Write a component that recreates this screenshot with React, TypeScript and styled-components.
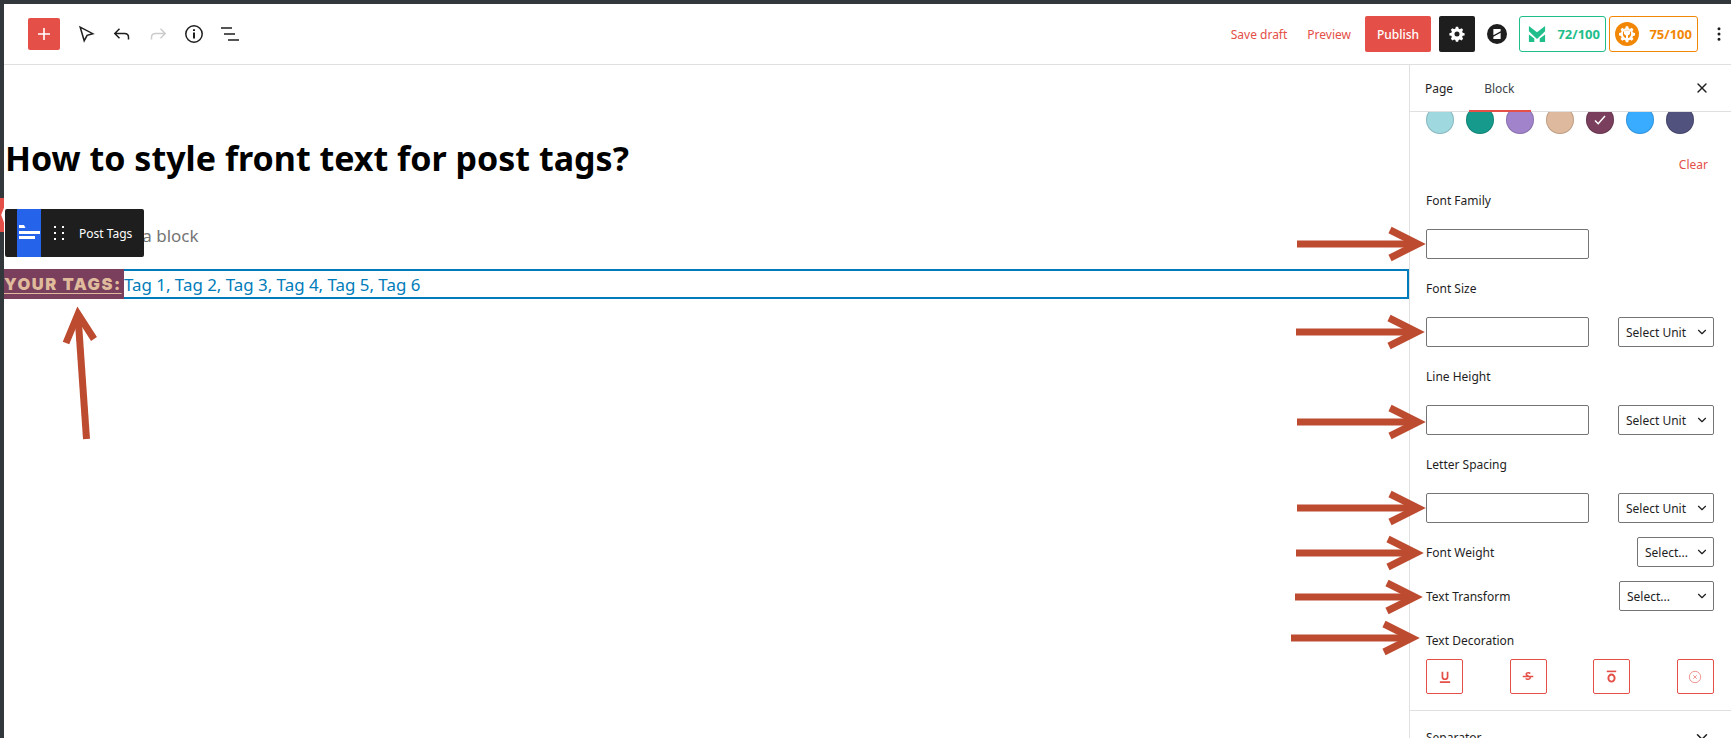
import React from 'react';
import styled, { createGlobalStyle } from 'styled-components';
import { ChevronDown, MoreVertical, X } from 'lucide-react';

const Global = createGlobalStyle`
	html, body {
		margin: 0;
		padding: 0;
		background: #fff;
		overflow: hidden;
	}
	* {
		box-sizing: border-box;
	}
`;

const Frame = styled.div`
	position: relative;
	width: 1731px;
	height: 738px;
	background: #fff;
	border-top: 4px solid #32373c;
	border-left: 4px solid #32373c;
	font-family: 'Noto Sans', sans-serif;
	color: #1e1e1e;
`;

const Header = styled.header`
	display: flex;
	align-items: center;
	height: 61px;
	padding: 0 3px 0 24px;
	border-bottom: 1px solid #e0e0e0;
`;

const AddButton = styled.button`
	display: flex;
	align-items: center;
	justify-content: center;
	width: 32px;
	height: 32px;
	padding: 0;
	margin-right: 8px;
	border: 0;
	border-radius: 2px;
	background: #e44f47;
`;

const ToolIcon = styled.span`
	display: flex;
	align-items: center;
	justify-content: center;
	width: 36px;
	height: 36px;
`;

const LogoIcon = styled(ToolIcon)`
	margin-left: 4px;
`;

const HeaderRight = styled.div`
	display: flex;
	align-items: center;
	margin-left: auto;
`;

const TextLink = styled.span`
	font-size: 12px;
	color: #e44f47;
	margin-right: 20px;
`;

const PublishButton = styled.button`
	width: 66px;
	height: 36px;
	margin-left: -6px;
	padding: 0;
	border: 0;
	border-radius: 2px;
	background: #e44f47;
	color: #fff;
	font: 500 12px 'Noto Sans', sans-serif;
`;

const SettingsButton = styled.button`
	display: flex;
	align-items: center;
	justify-content: center;
	width: 36px;
	height: 36px;
	margin-left: 8px;
	padding: 0;
	border: 0;
	border-radius: 2px;
	background: #1e1e1e;
`;

const ScoreBadge = styled.div<{ $color: string; $width: number; $left: number; $pad: number }>`
	display: flex;
	align-items: center;
	justify-content: space-between;
	width: ${p => p.$width}px;
	height: 36px;
	margin-left: ${p => p.$left}px;
	padding: 0 5px 0 ${p => p.$pad}px;
	border: 1px solid ${p => p.$color};
	border-radius: 3px;
	color: ${p => p.$color};
	font-size: 13px;
	font-weight: 700;
`;

const MoreButton = styled.span`
	display: flex;
	margin-left: 12px;
`;

const Main = styled.div`
	display: flex;
	height: 673px;
`;

const Canvas = styled.main`
	position: relative;
	flex: 1;
	min-width: 0;
`;

const Title = styled.h1`
	margin: 0;
	padding: 71px 0 0 1px;
	height: 144px;
	font-size: 34px;
	line-height: 44px;
	font-weight: 700;
	color: #000;
`;

const AppenderHint = styled.p`
	margin: 0;
	padding: 16px 0 0 3px;
	height: 60px;
	font-size: 17px;
	line-height: 22px;
	color: #757575;
`;

const TagsRow = styled.div`
	display: flex;
	align-items: center;
	height: 30px;
	border: 2px solid #007cba;
	border-left: 0;
	font-size: 16.9px;
	color: #007cba;
	background: #fff;
`;

const TagsLabel = styled.span`
	display: flex;
	align-items: center;
	align-self: stretch;
	margin: -2px 0;
	width: 120px;
	background: #7a3f5d;
	color: #dfbb9c;
	font-family: 'Inter', sans-serif;
	font-size: 16.5px;
	font-weight: 900;
	letter-spacing: 1.5px;
	text-decoration: underline;
	text-decoration-thickness: 1px;
	text-underline-offset: 3px;
	white-space: nowrap;
	overflow: hidden;
`;

const BlockToolbar = styled.div`
	position: absolute;
	left: 1px;
	top: 144px;
	display: flex;
	align-items: center;
	width: 139px;
	height: 48px;
	padding-left: 12px;
	border-radius: 2px;
	background: #1e1e1e;
	color: #fff;
	font-size: 12px;
`;

const BlockTypeButton = styled.span`
	display: flex;
	align-items: center;
	justify-content: center;
	align-self: stretch;
	width: 24px;
	background: #2563eb;
`;

const DragHandle = styled.span`
	display: flex;
	margin: 0 14px 0 12px;
`;

const RedMark = styled.span`
	position: absolute;
	left: -4px;
	top: 133px;
	width: 4px;
	height: 34px;
	background: #fff;
	&::before {
		content: '';
		display: block;
		width: 100%;
		height: 100%;
		background: #e44f47;
		clip-path: polygon(0 0, 100% 0, 100% 28%, 30% 50%, 100% 72%, 100% 100%, 0 100%);
	}
`;

const Sidebar = styled.aside`
	width: 322px;
	flex: none;
	border-left: 1px solid #e0e0e0;
	overflow: hidden;
	font-size: 12px;
`;

const Tabs = styled.div`
	display: flex;
	align-items: center;
	height: 47px;
	padding: 0 21px 0 15px;
	border-bottom: 1px solid #e0e0e0;
	position: relative;
	z-index: 1;
	background: #fff;
`;

const Tab = styled.span<{ $muted?: boolean }>`
	font-size: 12px;
	margin-right: 31px;
	color: ${p => (p.$muted ? '#3c434a' : '#1e1e1e')};
`;

const CloseButton = styled.span`
	display: flex;
	margin-left: auto;
`;

const ActiveTabLine = styled.span`
	position: absolute;
	left: 59px;
	bottom: -1px;
	width: 62px;
	height: 2px;
	background: #e44f47;
`;

const PanelBody = styled.div`
	padding: 0 17px 0 16px;
`;

const Swatches = styled.div`
	display: flex;
	gap: 12px;
	margin-top: -6px;
`;

const Swatch = styled.span<{ $color: string }>`
	display: flex;
	align-items: center;
	justify-content: center;
	width: 28px;
	height: 28px;
	border-radius: 50%;
	background: ${p => p.$color};
	box-shadow: inset 0 0 0 1px rgba(0, 0, 0, 0.15);
`;

const ClearRow = styled.div`
	display: flex;
	justify-content: flex-end;
	height: 17px;
	margin-top: 22px;
	padding-right: 6px;
	color: #e44f47;
	line-height: 17px;
`;

const Label = styled.div<{ $top: number }>`
	margin-top: ${p => p.$top}px;
	height: 17px;
	line-height: 17px;
	font-size: 12px;
`;

const FieldRow = styled.div`
	display: flex;
	justify-content: space-between;
	margin-top: 20px;
`;

const TextField = styled.div`
	width: 163px;
	height: 30px;
	border: 1px solid #757575;
	border-radius: 2px;
`;

const SelectBox = styled.div<{ $width: number }>`
	display: flex;
	align-items: center;
	justify-content: space-between;
	width: ${p => p.$width}px;
	height: 30px;
	padding: 0 4px 0 7px;
	border: 1px solid #757575;
	border-radius: 2px;
	font-size: 12px;
	white-space: nowrap;
`;

const InlineRow = styled.div<{ $top: number }>`
	display: flex;
	align-items: center;
	justify-content: space-between;
	margin-top: ${p => p.$top}px;
`;

const DecorationRow = styled.div`
	display: flex;
	justify-content: space-between;
	margin-top: 10px;
`;

const DecorationButton = styled.span`
	display: flex;
	align-items: center;
	justify-content: center;
	width: 37px;
	height: 35px;
	border: 1px solid #e44f47;
	border-radius: 2px;
`;

const Divider = styled.div`
	margin-top: 16px;
	border-top: 1px solid #e0e0e0;
`;

const SeparatorRow = styled.div`
	display: flex;
	align-items: center;
	justify-content: space-between;
	padding: 17px 20px 0 16px;
	font-size: 12px;
`;

const Annotations = styled.svg`
	position: absolute;
	left: -4px;
	top: -4px;
	pointer-events: none;
`;

const ARROW = '#bd4b30';

// x1 is the tail, x2 the very tip of the mitered head
const arrows = [
	{ x1: 1297, y: 244, x2: 1426 },
	{ x1: 1296, y: 332, x2: 1425 },
	{ x1: 1297, y: 422, x2: 1426 },
	{ x1: 1297, y: 508, x2: 1426 },
	{ x1: 1296, y: 553, x2: 1424 },
	{ x1: 1295, y: 597, x2: 1423 },
	{ x1: 1291, y: 638, x2: 1420 }
];

const swatchColors = ['#9fd8df', '#169a8c', '#a183cb', '#deb99d', '#7a3f5d', '#3aacff', '#51527e'];

const GEAR =
	'M10.3 1h3.400l.7 2.900 1.800.8 2.600-1.500 2.400 2.400-1.500 2.600.8 1.800 2.900.7v3.400l-2.900.7-.8 1.800 1.500 2.600-2.400 2.400-2.600-1.500-1.800.8-.7 2.900h-3.400l-.7-2.900-1.800-.8-2.600 1.500-2.400-2.400 1.500-2.600-.8-1.800-2.900-.7v-3.400l2.900-.7.8-1.800-1.500-2.600 2.400-2.400 2.600 1.500 1.800-.8z';

const PlusIcon = () => (
	<svg width="16" height="16" viewBox="0 0 16 16">
		<path d="M8 2v12M2 8h12" stroke="#fff" strokeWidth="1.6" />
	</svg>
);

const Chevron = () => <ChevronDown size={14} strokeWidth={2} color="#1e1e1e" />;

const App: React.FunctionComponent<{}> = () => {
	return (
		<Frame>
			<Global />
			<Header>
				<AddButton>
					<PlusIcon />
				</AddButton>
				<ToolIcon>
					<svg width="24" height="24" viewBox="0 0 24 24" fill="none" stroke="#1e1e1e" strokeWidth="1.5">
						<path d="M6.200 5.200l12.600 6.500-5.700 1.700-2.900 5.300z" />
					</svg>
				</ToolIcon>
				<ToolIcon>
					<svg width="24" height="24" viewBox="0 0 24 24" fill="none" stroke="#1e1e1e" strokeWidth="1.5">
						<path d="M18.500 17.500v-2.200c0-2.400-1.600-3.800-4-3.800H5M9.500 6.800L4.800 11.500l4.700 4.700" />
					</svg>
				</ToolIcon>
				<ToolIcon>
					<svg width="24" height="24" viewBox="0 0 24 24" fill="none" stroke="#ccc" strokeWidth="1.5">
						<path d="M5.500 17.500v-2.200c0-2.400 1.600-3.800 4-3.800H19M14.500 6.800l4.700 4.700-4.700 4.700" />
					</svg>
				</ToolIcon>
				<ToolIcon>
					<svg width="24" height="24" viewBox="0 0 24 24" fill="none" stroke="#1e1e1e" strokeWidth="1.5">
						<circle cx="12" cy="12" r="8.200" />
						<path d="M12 10.500v6M12 7.200v1.800" strokeWidth="2" />
					</svg>
				</ToolIcon>
				<ToolIcon>
					<svg width="24" height="24" viewBox="0 0 24 24" fill="none" stroke="#1e1e1e" strokeWidth="1.5">
						<path d="M3 6h11M6 12h11M10 18h11" />
					</svg>
				</ToolIcon>
				<HeaderRight>
					<TextLink>Save draft</TextLink>
					<TextLink>Preview</TextLink>
					<PublishButton>Publish</PublishButton>
					<SettingsButton>
						<svg width="16" height="16" viewBox="0 0 24 24">
							<path d={GEAR} fill="#fff" />
							<circle cx="12" cy="12" r="3.800" fill="#1e1e1e" />
						</svg>
					</SettingsButton>
					<LogoIcon>
						<svg width="20" height="20" viewBox="0 0 22 22">
							<circle cx="11" cy="11" r="11" fill="#1e1e1e" />
							<path d="M7 5.500h8v2.500l-8 4.500zM15 9.500v7H7V14z" fill="#fff" />
						</svg>
					</LogoIcon>
					<ScoreBadge $color="#1fbe8a" $width={87} $left={4} $pad={8}>
						<svg width="18" height="18" viewBox="0 0 20 20" fill="#1fbe8a">
							<path d="M1 1l9 7 9-7v6l-9 8.500L1 7zM1 10.500L7 15v4H1zM19 10.500V19h-6v-4z" />
						</svg>
						<span>72/100</span>
					</ScoreBadge>
					<ScoreBadge $color="#f28705" $width={89} $left={3} $pad={5}>
						<svg width="24" height="24" viewBox="0 0 24 24">
							<circle cx="12" cy="12" r="12" fill="#f28705" />
							<g transform="translate(3.600 3.600) scale(0.7)">
								<path d={GEAR} fill="#fff" />
								<circle cx="12" cy="12" r="6" fill="#f28705" />
							</g>
							<path d="M9 8.500h1.500V7h1v1.500h1V7h1v1.500H15V12l-2 1.500V17h-2v-3.500L9 12z" fill="#fff" />
						</svg>
						<span>75/100</span>
					</ScoreBadge>
					<MoreButton>
						<MoreVertical size={18} color="#1e1e1e" />
					</MoreButton>
				</HeaderRight>
			</Header>
			<Main>
				<Canvas>
					<RedMark />
					<Title>How to style front text for post tags?</Title>
					<AppenderHint>Type / to choose a block</AppenderHint>
					<TagsRow>
						<TagsLabel>YOUR TAGS:</TagsLabel>
						<span>Tag 1, Tag 2, Tag 3, Tag 4, Tag 5, Tag 6</span>
					</TagsRow>
					<BlockToolbar>
						<BlockTypeButton>
							<svg width="24" height="24" viewBox="0 0 24 24" fill="#fff">
								<path d="M2 4h5l1.500 3H2zM2 10h21v3H2zM2 15h16v3H2z" />
							</svg>
						</BlockTypeButton>
						<DragHandle>
							<svg width="12" height="18" viewBox="0 0 12 18" fill="#fff">
								<path d="M1 2h2v2H1zM9 2h2v2H9zM1 8h2v2H1zM9 8h2v2H9zM1 14h2v2H1zM9 14h2v2H9z" />
							</svg>
						</DragHandle>
						<span>Post Tags</span>
					</BlockToolbar>
				</Canvas>
				<Sidebar>
					<Tabs>
						<Tab>Page</Tab>
						<Tab $muted>Block</Tab>
						<CloseButton>
							<X size={16} strokeWidth={2} color="#1e1e1e" />
						</CloseButton>
						<ActiveTabLine />
					</Tabs>
					<PanelBody>
						<Swatches>
							{swatchColors.map((color, i) => (
								<Swatch key={color} $color={color}>
									{i === 4 && (
										<svg width="16" height="16" viewBox="0 0 16 16" fill="none" stroke="#fff" strokeWidth="1.5">
											<path d="M3 8.500l3.200 3.200L13 4" />
										</svg>
									)}
								</Swatch>
							))}
						</Swatches>
						<ClearRow>Clear</ClearRow>
						<Label $top={19}>Font Family</Label>
						<FieldRow>
							<TextField />
						</FieldRow>
						<Label $top={21}>Font Size</Label>
						<FieldRow>
							<TextField />
							<SelectBox $width={96}>
								Select Unit <Chevron />
							</SelectBox>
						</FieldRow>
						<Label $top={21}>Line Height</Label>
						<FieldRow>
							<TextField />
							<SelectBox $width={96}>
								Select Unit <Chevron />
							</SelectBox>
						</FieldRow>
						<Label $top={21}>Letter Spacing</Label>
						<FieldRow>
							<TextField />
							<SelectBox $width={96}>
								Select Unit <Chevron />
							</SelectBox>
						</FieldRow>
						<InlineRow $top={14}>
							Font Weight
							<SelectBox $width={77}>
								Select... <Chevron />
							</SelectBox>
						</InlineRow>
						<InlineRow $top={14}>
							Text Transform
							<SelectBox $width={95}>
								Select... <Chevron />
							</SelectBox>
						</InlineRow>
						<Label $top={21}>Text Decoration</Label>
						<DecorationRow>
							<DecorationButton>
								<svg width="12" height="12" viewBox="0 0 14 14" fill="none" stroke="#e44f47" strokeWidth="2">
									<path d="M4 1V7c0 3.500 6 3.500 6 0V1M1 13h12" />
								</svg>
							</DecorationButton>
							<DecorationButton>
								<svg width="12" height="11" viewBox="0 0 16 14" fill="none" stroke="#e44f47" strokeWidth="2">
									<path d="M11 3c-1-1.500-5.500-1.500-5.500.8 0 2.800 5.500 2 5.500 5 0 2.400-5 2.400-6 .7M1 7h14" />
								</svg>
							</DecorationButton>
							<DecorationButton>
								<svg width="11" height="13" viewBox="0 0 14 16" fill="none" stroke="#e44f47" strokeWidth="2">
									<path d="M1 1.500h12" />
									<ellipse cx="7" cy="10" rx="4" ry="4.500" strokeWidth="2.400" />
								</svg>
							</DecorationButton>
							<DecorationButton>
								<svg width="14" height="14" viewBox="0 0 16 16" fill="none" stroke="#eb8a84" strokeWidth="1">
									<circle cx="8" cy="8" r="6.500" />
									<path d="M6 6l4 4M10 6l-4 4" />
								</svg>
							</DecorationButton>
						</DecorationRow>
					</PanelBody>
					<Divider />
					<SeparatorRow>
						Separator <ChevronDown size={18} color="#1e1e1e" />
					</SeparatorRow>
				</Sidebar>
			</Main>
			<Annotations width="1731" height="738" viewBox="0 0 1731 738">
				<g fill="none" stroke={ARROW} strokeWidth="7">
					{arrows.map(a => (
						<g key={a.y}>
							<path d={`M${a.x1} ${a.y}H${a.x2 - 8}`} />
							<path d={`M${a.x2 - 36} ${a.y - 14}L${a.x2 - 8} ${a.y}L${a.x2 - 36} ${a.y + 14}`} />
						</g>
					))}
					<path d="M86.500 439L78 316" />
					<path d="M66 343L78 314L94 339" />
				</g>
			</Annotations>
		</Frame>
	);
};

export default App;
